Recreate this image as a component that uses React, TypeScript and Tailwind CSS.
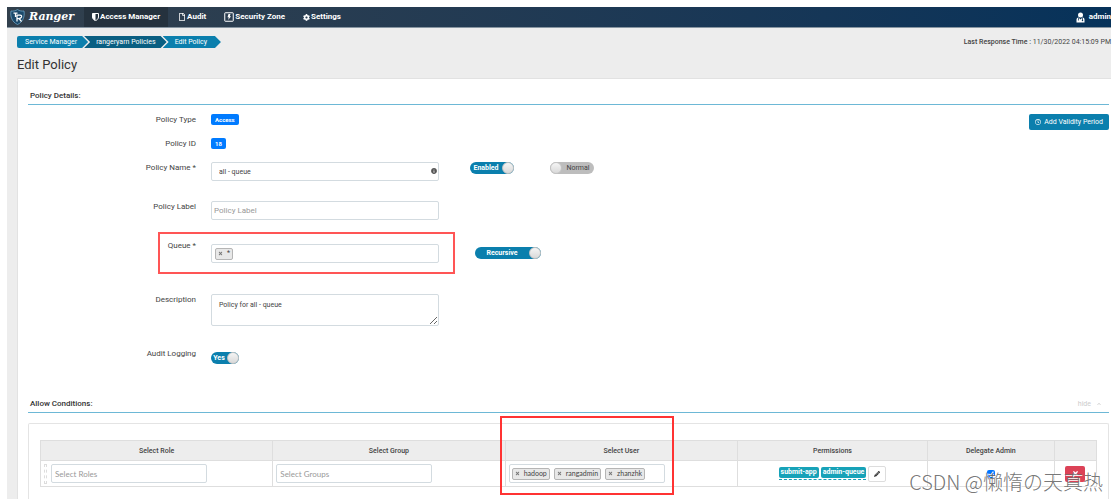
import { useState } from "react";
import clsx from "clsx";
import {
  FaChevronUp,
  FaCog,
  FaInfoCircle,
  FaPencilAlt,
  FaRegClock,
  FaRegFile,
  FaTimes,
} from "react-icons/fa";

function RangerLogo() {
  return (
    <svg width="15" height="16" viewBox="0 0 30 32" aria-hidden="true">
      <path
        d="M15 1C11 4 6 4.500 2 4C0 15 4 26 15 31C26 26 30 15 28 4C24 4.500 19 4 15 1Z"
        fill="#1c4a6b"
        stroke="#6fa8c9"
        strokeWidth="1.500"
      />
      <path
        d="M7 8H15M11 8V16M13 12H20Q24 12 23 16Q22 19 17 19H14M14 12V25M18 19L23 25"
        fill="none"
        stroke="#fff"
        strokeWidth="2.500"
      />
    </svg>
  );
}

function ShieldIcon() {
  return (
    <svg width="7" height="8" viewBox="0 0 14 16" aria-hidden="true">
      <path
        d="M1 1H13V8C13 12 9 14.500 7 15.500C5 14.500 1 12 1 8Z"
        fill="none"
        stroke="#fff"
        strokeWidth="2"
      />
      <path d="M1 1H7V15.500C5 14.500 1 12 1 8Z" fill="#fff" />
    </svg>
  );
}

function BoltIcon() {
  return (
    <svg width="10" height="10" viewBox="0 0 20 20" aria-hidden="true">
      <rect x="1.500" y="1.500" width="17" height="17" rx="1" fill="none" stroke="#fff" strokeWidth="2" />
      <path d="M9 4H13L11.500 8.500H14L8.500 16L9.500 10.500H7Z" fill="#fff" />
    </svg>
  );
}

function UserIcon() {
  return (
    <svg width="9" height="11" viewBox="0 0 18 22" aria-hidden="true">
      <circle cx="9" cy="6" r="5" fill="#fff" />
      <path d="M1 21V15Q1 11 5 11L9 15L13 11Q17 11 17 15V21Z" fill="#fff" />
      <path d="M5 12V17M13 12V16" stroke="#0a3358" strokeWidth="1.500" />
      <circle cx="13" cy="17" r="1.500" fill="#0a3358" />
    </svg>
  );
}

const navItems = [
  { label: "Access Manager", icon: <ShieldIcon />, active: true },
  { label: "Audit", icon: <FaRegFile size={8} /> },
  { label: "Security Zone", icon: <BoltIcon /> },
  { label: "Settings", icon: <FaCog size={7} /> },
];

type ToggleProps = {
  name: string;
  on: string;
  off: string;
  initial: boolean;
  className: string;
};

function Toggle({ name, on, off, initial, className }: ToggleProps) {
  const [checked, setChecked] = useState(initial);
  return (
    <button
      type="button"
      role="switch"
      aria-checked={checked}
      aria-label={name}
      onClick={() => setChecked(!checked)}
      className={clsx(
        "flex h-3 shrink-0 items-center rounded-full text-[7px] leading-3",
        checked
          ? "bg-[#0b7fad] font-bold text-white"
          : "flex-row-reverse bg-[#bdbdbd] text-[#444]",
        className,
      )}
    >
      <span className="flex-1 text-center">{checked ? on : off}</span>
      <span className="size-3 rounded-full border border-[#c4c4c4] bg-linear-to-b from-[#f5f5f5] to-[#d9d9d9]" />
    </button>
  );
}

function Tag({ text }: { text: string }) {
  return (
    <span className="flex h-3 items-center gap-1 rounded-xs border border-[#b5b5b5] bg-[#e8e8e8] px-[2px] text-[7px] leading-none text-[#444]">
      <button type="button" aria-label={`Remove ${text}`} className="text-[#777]">
        <FaTimes size={5} />
      </button>
      {text}
    </span>
  );
}

function SectionTitle({ children, action }: { children: string; action?: React.ReactNode }) {
  return (
    <div className="flex justify-between border-b border-[#6db8d6] px-[2px] pb-[2px]">
      <h2 className="font-medium text-[#333]">{children}</h2>
      {action}
    </div>
  );
}

type RowProps = {
  label: string;
  htmlFor?: string;
  className: string;
  children: React.ReactNode;
};

function Row({ label, htmlFor, className, children }: RowProps) {
  return (
    <div className={clsx("relative flex items-start", className)}>
      <label htmlFor={htmlFor} className="mr-[15px] w-[168px] shrink-0 text-right">
        {label}
      </label>
      {children}
    </div>
  );
}

const fieldBox = "rounded-xs border border-[#d3dbe0] bg-white outline-none";

export default function App() {
  const [delegate, setDelegate] = useState(true);
  return (
    <div className="flex min-h-screen flex-col overflow-hidden bg-white px-[7px] pt-[7px] pb-1 font-[Roboto,sans-serif] text-[8px] leading-3 text-[#444]">
      {/* top bar */}
      <header className="flex h-[21px] shrink-0 items-stretch border-b border-[#8795a1] bg-linear-to-r from-[#32404d] to-[#06325a] text-white">
        <a href="#" className="flex w-[77px] items-center gap-1 pl-[3px]">
          <RangerLogo />
          <span className="font-['DejaVu_Serif',serif] text-[11px] font-bold italic">Ranger</span>
        </a>
        <nav className="flex gap-[2px]">
          {navItems.map((item) => (
            <a
              key={item.label}
              href="#"
              className={clsx(
                "flex items-center gap-px px-2 font-bold whitespace-nowrap",
                item.active && "bg-[#25323e]",
              )}
            >
              {item.icon}
              {item.label}
            </a>
          ))}
        </nav>
        <a href="#" className="ml-auto flex items-center gap-1 font-bold">
          <UserIcon />
          admin
        </a>
      </header>

      <main className="flex flex-1 flex-col bg-[#ededed] pt-2 pl-[10px]">
        {/* breadcrumb + response time */}
        <div className="flex items-start justify-between">
          <nav aria-label="Breadcrumb" className="flex text-[7px] text-white">
            <a
              href="#"
              className="rounded-l-xs bg-[#0b7fad] pr-[11px] pl-2 [clip-path:polygon(0_0,calc(100%-6px)_0,100%_50%,calc(100%-6px)_100%,0_100%)]"
            >
              Service Manager
            </a>
            <a
              href="#"
              className="-ml-1 bg-[#0a5f82] pr-[11px] pl-3 [clip-path:polygon(0_0,calc(100%-6px)_0,100%_50%,calc(100%-6px)_100%,0_100%,6px_50%)]"
            >
              rangeryarn Policies
            </a>
            <a
              href="#"
              className="-ml-1 bg-[#0b7fad] pr-[14px] pl-3 [clip-path:polygon(0_0,calc(100%-6px)_0,100%_50%,calc(100%-6px)_100%,0_100%,6px_50%)]"
            >
              Edit Policy
            </a>
          </nav>
          <p className="text-[7px]">
            <span className="font-medium">Last Response Time :</span> 11/30/2022 04:15:09 PM
          </p>
        </div>

        <h1 className="mt-2 text-[13px] leading-[18px] text-[#333]">Edit Policy</h1>

        {/* policy card */}
        <div className="mt-1 flex-1 border-t border-l border-[#e2e2e2] bg-white pt-[11px] pr-[2px] pl-[10px]">
          <SectionTitle>Policy Details:</SectionTitle>

          <div className="flex items-start justify-between pt-[9px]">
            <form>
              <Row label="Policy Type" className="h-6">
                <span className="rounded-xs bg-[#007bff] px-1 text-[6px] leading-[11px] font-bold text-white">
                  Access
                </span>
              </Row>
              <Row label="Policy ID" className="h-6">
                <span className="rounded-xs bg-[#007bff] px-1 text-[6px] leading-[11px] font-bold text-white">
                  18
                </span>
              </Row>
              <Row label="Policy Name *" htmlFor="name" className="h-[39px]">
                <div className="relative w-[228px]">
                  <input
                    id="name"
                    defaultValue="all - queue"
                    className={clsx(fieldBox, "h-[19px] w-full px-[7px] text-[7px]")}
                  />
                  <FaInfoCircle size={6} className="absolute top-[6px] right-[2px] text-[#555]" />
                </div>
                <Toggle name="Policy status" on="Enabled" off="Disabled" initial className="ml-[31px] w-11" />
                <Toggle
                  name="Policy priority"
                  on="Override"
                  off="Normal"
                  initial={false}
                  className="ml-9 w-11"
                />
              </Row>
              <Row label="Policy Label" htmlFor="label" className="h-[39px]">
                <input
                  id="label"
                  placeholder="Policy Label"
                  className={clsx(fieldBox, "h-[19px] w-[228px] px-[2px] placeholder:text-[#999]")}
                />
              </Row>
              <Row label="Queue *" htmlFor="queue" className="h-[54px]">
                <div
                  className={clsx(fieldBox, "mt-1 flex h-[19px] w-[228px] items-center gap-1 px-[3px]")}
                >
                  <Tag text="*" />
                  <input id="queue" className="min-w-0 flex-1 outline-none" />
                </div>
                <Toggle
                  name="Recursive"
                  on="Recursive"
                  off="Non-recursive"
                  initial
                  className="mt-[7px] ml-9 w-[66px]"
                />
                <div className="pointer-events-none absolute -top-2 left-[130px] h-[42px] w-[297px] border-2 border-[#f55]" />
              </Row>
              <Row label="Description" htmlFor="description" className="h-[54px]">
                <textarea
                  id="description"
                  defaultValue="Policy for all - queue"
                  className={clsx(fieldBox, "h-8 w-[228px] px-[7px] py-1 text-[7px]")}
                />
              </Row>
              <Row label="Audit Logging" className="h-[50px]">
                <Toggle name="Audit Logging" on="Yes" off="No" initial className="mt-1 w-7" />
              </Row>
            </form>
            <button
              type="button"
              className="flex h-4 items-center gap-[3px] rounded-xs bg-[#0b7fad] px-[6px] text-[7px] whitespace-nowrap text-white"
            >
              <FaRegClock size={6} />
              Add Validity Period
            </button>
          </div>

          <SectionTitle
            action={
              <button
                type="button"
                className="mr-[6px] flex items-center gap-[6px] text-[7px] text-[#ccc]"
              >
                hide
                <FaChevronUp size={4} />
              </button>
            }
          >
            Allow Conditions:
          </SectionTitle>

          {/* allow conditions table */}
          <div className="mt-[10px] rounded-t-xs border border-b-0 border-[#e4e4e4] px-[11px] pt-4 pb-3">
            <table className="w-full table-fixed border-collapse text-[7px]">
              <thead>
                <tr className="h-5 bg-[#ededed] [&>th]:border [&>th]:border-[#dedede] [&>th]:font-medium">
                  <th className="w-[22%]">Select Role</th>
                  <th className="w-[22%]">Select Group</th>
                  <th className="relative w-[22%]">
                    Select User
                    <div className="pointer-events-none absolute -top-[25px] -left-[6px] h-[79px] w-[174px] border-2 border-[#f33]" />
                  </th>
                  <th className="w-[18%]">Permissions</th>
                  <th className="w-[12%]">Delegate Admin</th>
                  <th className="w-[4%]" aria-label="Actions" />
                </tr>
              </thead>
              <tbody>
                <tr className="h-[26px] [&>td]:border [&>td]:border-[#dedede] [&>td]:px-[3px]">
                  <td>
                    <div className="flex items-center gap-1">
                      <span className="h-5 w-[3px] border border-dashed border-[#ddd]" />
                      <input
                        aria-label="Select Roles"
                        placeholder="Select Roles"
                        className={clsx(
                          fieldBox,
                          "h-[19px] w-[156px] px-[3px] font-[Lato,sans-serif] text-[8px] placeholder:text-[#999]",
                        )}
                      />
                    </div>
                  </td>
                  <td>
                    <input
                      aria-label="Select Groups"
                      placeholder="Select Groups"
                      className={clsx(
                        fieldBox,
                        "block h-[19px] w-[156px] px-[3px] font-[Lato,sans-serif] text-[8px] placeholder:text-[#999]",
                      )}
                    />
                  </td>
                  <td>
                    <div
                      className={clsx(
                        fieldBox,
                        "flex h-[19px] w-[156px] items-center gap-1 px-[2px] font-[Lato,sans-serif]",
                      )}
                    >
                      <Tag text="hadoop" />
                      <Tag text="rangadmin" />
                      <Tag text="zhanzhk" />
                      <input aria-label="Select User" className="min-w-0 flex-1 outline-none" />
                    </div>
                  </td>
                  <td>
                    <div className="flex items-center justify-center gap-[2px]">
                      <div className="flex gap-[2px] border-b border-dashed border-[#17a2b8] pb-px text-[7px] leading-[11px] font-bold whitespace-nowrap text-white">
                        <span className="rounded-xs bg-[#17a2b8] px-[2px]">submit-app</span>
                        <span className="rounded-xs bg-[#17a2b8] px-[2px]">admin-queue</span>
                      </div>
                      <button
                        type="button"
                        aria-label="Edit permissions"
                        className="flex h-4 w-[18px] items-center justify-center rounded-xs border border-[#ddd] text-[#333]"
                      >
                        <FaPencilAlt size={6} />
                      </button>
                    </div>
                  </td>
                  <td>
                    <input
                      type="checkbox"
                      aria-label="Delegate Admin"
                      checked={delegate}
                      onChange={() => setDelegate(!delegate)}
                      className="mx-auto block size-2 accent-[#0075ff]"
                    />
                  </td>
                  <td>
                    <button
                      type="button"
                      aria-label="Delete"
                      className="mx-auto flex h-4 w-5 items-center justify-center rounded-xs bg-[#dc4257] text-white"
                    >
                      <FaTimes size={7} />
                    </button>
                  </td>
                </tr>
              </tbody>
            </table>
          </div>
        </div>
      </main>

      <p className="pointer-events-none absolute right-[15px] bottom-[6px] font-['Noto_Sans_CJK_SC',sans-serif] text-[20px] leading-7 font-light whitespace-nowrap text-[#666]/90 [text-shadow:1px_1px_0_#fff]">
        CSDN @懒惰の天真热
      </p>
    </div>
  );
}
